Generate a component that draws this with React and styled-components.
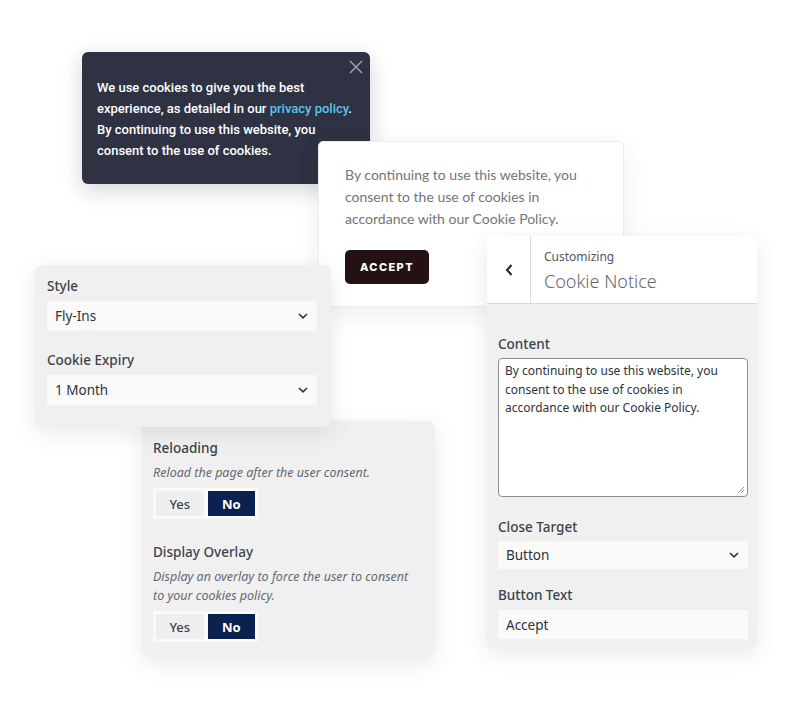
import React from "react";
import styled, { createGlobalStyle } from "styled-components";

const GlobalStyle = createGlobalStyle`
  html, body {
    margin: 0;
    padding: 0;
    background: #ffffff;
  }
  * { box-sizing: border-box; }
`;

const Canvas = styled.div`
  position: relative;
  width: 800px;
  height: 708px;
  overflow: hidden;
  background: #fff;
  font-family: "Noto Sans", "Open Sans", sans-serif;
`;

// every card sits on the canvas at its own spot
const Card = styled.div`
  position: absolute;
  left: ${p => p.x}px;
  top: ${p => p.y}px;
  width: ${p => p.w}px;
  height: ${p => p.h}px;
  z-index: ${p => p.z};
`;

const DarkNotice = styled(Card)`
  background: #2f3243;
  border-radius: 6px;
  padding: 25px 16px 0 15px;
  box-shadow: 0 6px 22px rgba(20, 20, 40, 0.18);
  color: #fff;
  font-family: Roboto, "Liberation Sans", sans-serif;
  font-size: 13px;
  font-weight: 500;
  line-height: 21px;
`;

const Close = styled.svg`
  position: absolute;
  right: 6px;
  top: 7px;
`;

const Link = styled.span`
  color: #5cc3ea;
`;

const LightNotice = styled(Card)`
  background: #fff;
  border: 1px solid #ececec;
  border-radius: 5px;
  padding: 22px 26px;
  box-shadow: 0 6px 26px rgba(0, 0, 0, 0.07);
`;

const NoticeText = styled.p`
  margin: 0;
  font-family: Lato, "Open Sans", sans-serif;
  font-size: 14px;
  line-height: 22px;
  color: #747474;
`;

const AcceptButton = styled.button`
  margin-top: 20px;
  width: 84px;
  height: 34px;
  border: none;
  border-radius: 5px;
  background: #241111;
  color: #fff;
  font-family: Inter, sans-serif;
  font-weight: 800;
  font-size: 11px;
  letter-spacing: 1.4px;
`;

const Panel = styled(Card)`
  background: #f0f0f1;
  border-radius: 8px;
  padding: ${p => p.pad || "11px 12px"};
  box-shadow: 0 6px 24px rgba(0, 0, 0, 0.09);
  display: flex;
  flex-direction: column;
`;

const Label = styled.div`
  font-size: 13.5px;
  font-weight: 500;
  color: #3c434a;
  line-height: 20px;
  margin: ${p => p.m || "0"};
`;

const Hint = styled.div`
  max-width: 262px;
  font-size: 12.5px;
  font-style: italic;
  color: #646970;
  line-height: 19px;
  margin-top: 5px;
`;

const Select = styled.div`
  display: flex;
  flex-shrink: 0;
  align-items: center;
  justify-content: space-between;
  height: ${p => p.h || 30}px;
  background: #fafafb;
  padding: 0 8px 0 8px;
  margin-top: ${p => p.mt || 5}px;
  font-size: 13.5px;
  color: #2c3338;
`;

const Toggle = styled.div`
  display: flex;
  flex-shrink: 0;
  gap: 4px;
  width: 105px;
  padding: 3px;
  margin-top: 6px;
  background: #fafafb;
`;

const ToggleOption = styled.div`
  flex: 1;
  height: 25px;
  display: flex;
  align-items: center;
  justify-content: center;
  font-size: 13px;
  font-weight: ${p => (p.on ? 700 : 500)};
  background: ${p => (p.on ? "#0b2150" : "#efeff0")};
  color: ${p => (p.on ? "#fff" : "#3c434a")};
`;

const Customizer = styled(Card)`
  background: #f0f0f1;
  border-radius: 6px;
  overflow: hidden;
  box-shadow: 0 6px 24px rgba(0, 0, 0, 0.09);
  display: flex;
  flex-direction: column;
`;

const Header = styled.div`
  display: flex;
  flex-shrink: 0;
  height: 68px;
  background: #fff;
  border-bottom: 1px solid #dcdcde;
`;

const Back = styled.div`
  width: 44px;
  border-right: 1px solid #dcdcde;
  display: flex;
  align-items: center;
  justify-content: center;
`;

const Titles = styled.div`
  padding: 13px 0 0 13px;
`;

const Small = styled.div`
  font-size: 12px;
  color: #50575e;
  line-height: 16px;
`;

const Big = styled.div`
  font-size: 18px;
  font-weight: 300;
  color: #646970;
  line-height: 26px;
  margin-top: 3px;
`;

const Body = styled.div`
  padding: 30px 9px 0 11px;
  display: flex;
  flex-direction: column;
`;

const TextArea = styled.div`
  position: relative;
  height: 139px;
  margin-top: 4px;
  background: #fff;
  border: 1px solid #8c8f94;
  border-radius: 4px;
  padding: 3px 6px;
  font-size: 12px;
  line-height: 18.5px;
  color: #2c3338;
`;

const Grip = styled.svg`
  position: absolute;
  right: 2px;
  bottom: 2px;
`;

const Input = styled.div`
  height: 29px;
  background: #fafafb;
  margin-top: 5px;
  padding: 0 8px;
  display: flex;
  align-items: center;
  font-size: 13.5px;
  color: #2c3338;
`;

const Chevron = () => (
  <svg width="12" height="8" viewBox="0 0 12 8">
    <path d="M2 2 L6 5.8 L10 2" fill="none" stroke="#2c3338" strokeWidth="1.6" />
  </svg>
);

export default function App() {
  return (
    <Canvas>
      <GlobalStyle />

      <DarkNotice x={82} y={52} w={288} h={132} z={1}>
        <Close width="16" height="16" viewBox="0 0 16 16">
          <path d="M2 2 L14 14 M14 2 L2 14" stroke="#a6a8b2" strokeWidth="1.3" />
        </Close>
        We use cookies to give you the best experience, as detailed in our{" "}
        <Link>privacy policy</Link>. By continuing to use this website, you consent to the use of cookies.
      </DarkNotice>

      <LightNotice x={318} y={141} w={306} h={166} z={2}>
        <NoticeText>
          By continuing to use this website, you consent to the use of cookies in accordance with our
          Cookie Policy.
        </NoticeText>
        <AcceptButton>ACCEPT</AcceptButton>
      </LightNotice>

      <Panel x={142} y={421} w={293} h={236} z={3} pad="17px 11px 0">
        <Label>Reloading</Label>
        <Hint>Reload the page after the user consent.</Hint>
        <Toggle>
          <ToggleOption>Yes</ToggleOption>
          <ToggleOption on>No</ToggleOption>
        </Toggle>
        <Label m="23px 0 0">Display Overlay</Label>
        <Hint>Display an overlay to force the user to consent to your cookies policy.</Hint>
        <Toggle>
          <ToggleOption>Yes</ToggleOption>
          <ToggleOption on>No</ToggleOption>
        </Toggle>
      </Panel>

      <Panel x={35} y={265} w={296} h={162} z={4} pad="11px 14px 0 12px">
        <Label>Style</Label>
        <Select>
          Fly-Ins
          <Chevron />
        </Select>
        <Label m="19px 0 0">Cookie Expiry</Label>
        <Select>
          1 Month
          <Chevron />
        </Select>
      </Panel>

      <Customizer x={487} y={236} w={270} h={412} z={5}>
        <Header>
          <Back>
            <svg width="10" height="14" viewBox="0 0 10 14">
              <path d="M7.5 2 L3 7 L7.5 12" fill="none" stroke="#1d2327" strokeWidth="2" />
            </svg>
          </Back>
          <Titles>
            <Small>Customizing</Small>
            <Big>Cookie Notice</Big>
          </Titles>
        </Header>
        <Body>
          <Label>Content</Label>
          <TextArea>
            By continuing to use this website, you consent to the use of cookies in accordance with our
            Cookie Policy.
            <Grip width="9" height="9" viewBox="0 0 9 9">
              <path d="M8 2 L2 8 M8 5 L5 8" stroke="#8c8f94" strokeWidth="1" />
            </Grip>
          </TextArea>
          <Label m="20px 0 0">Close Target</Label>
          <Select h={28} mt={4}>
            Button
            <Chevron />
          </Select>
          <Label m="16px 0 0">Button Text</Label>
          <Input>Accept</Input>
        </Body>
      </Customizer>
    </Canvas>
  );
}
